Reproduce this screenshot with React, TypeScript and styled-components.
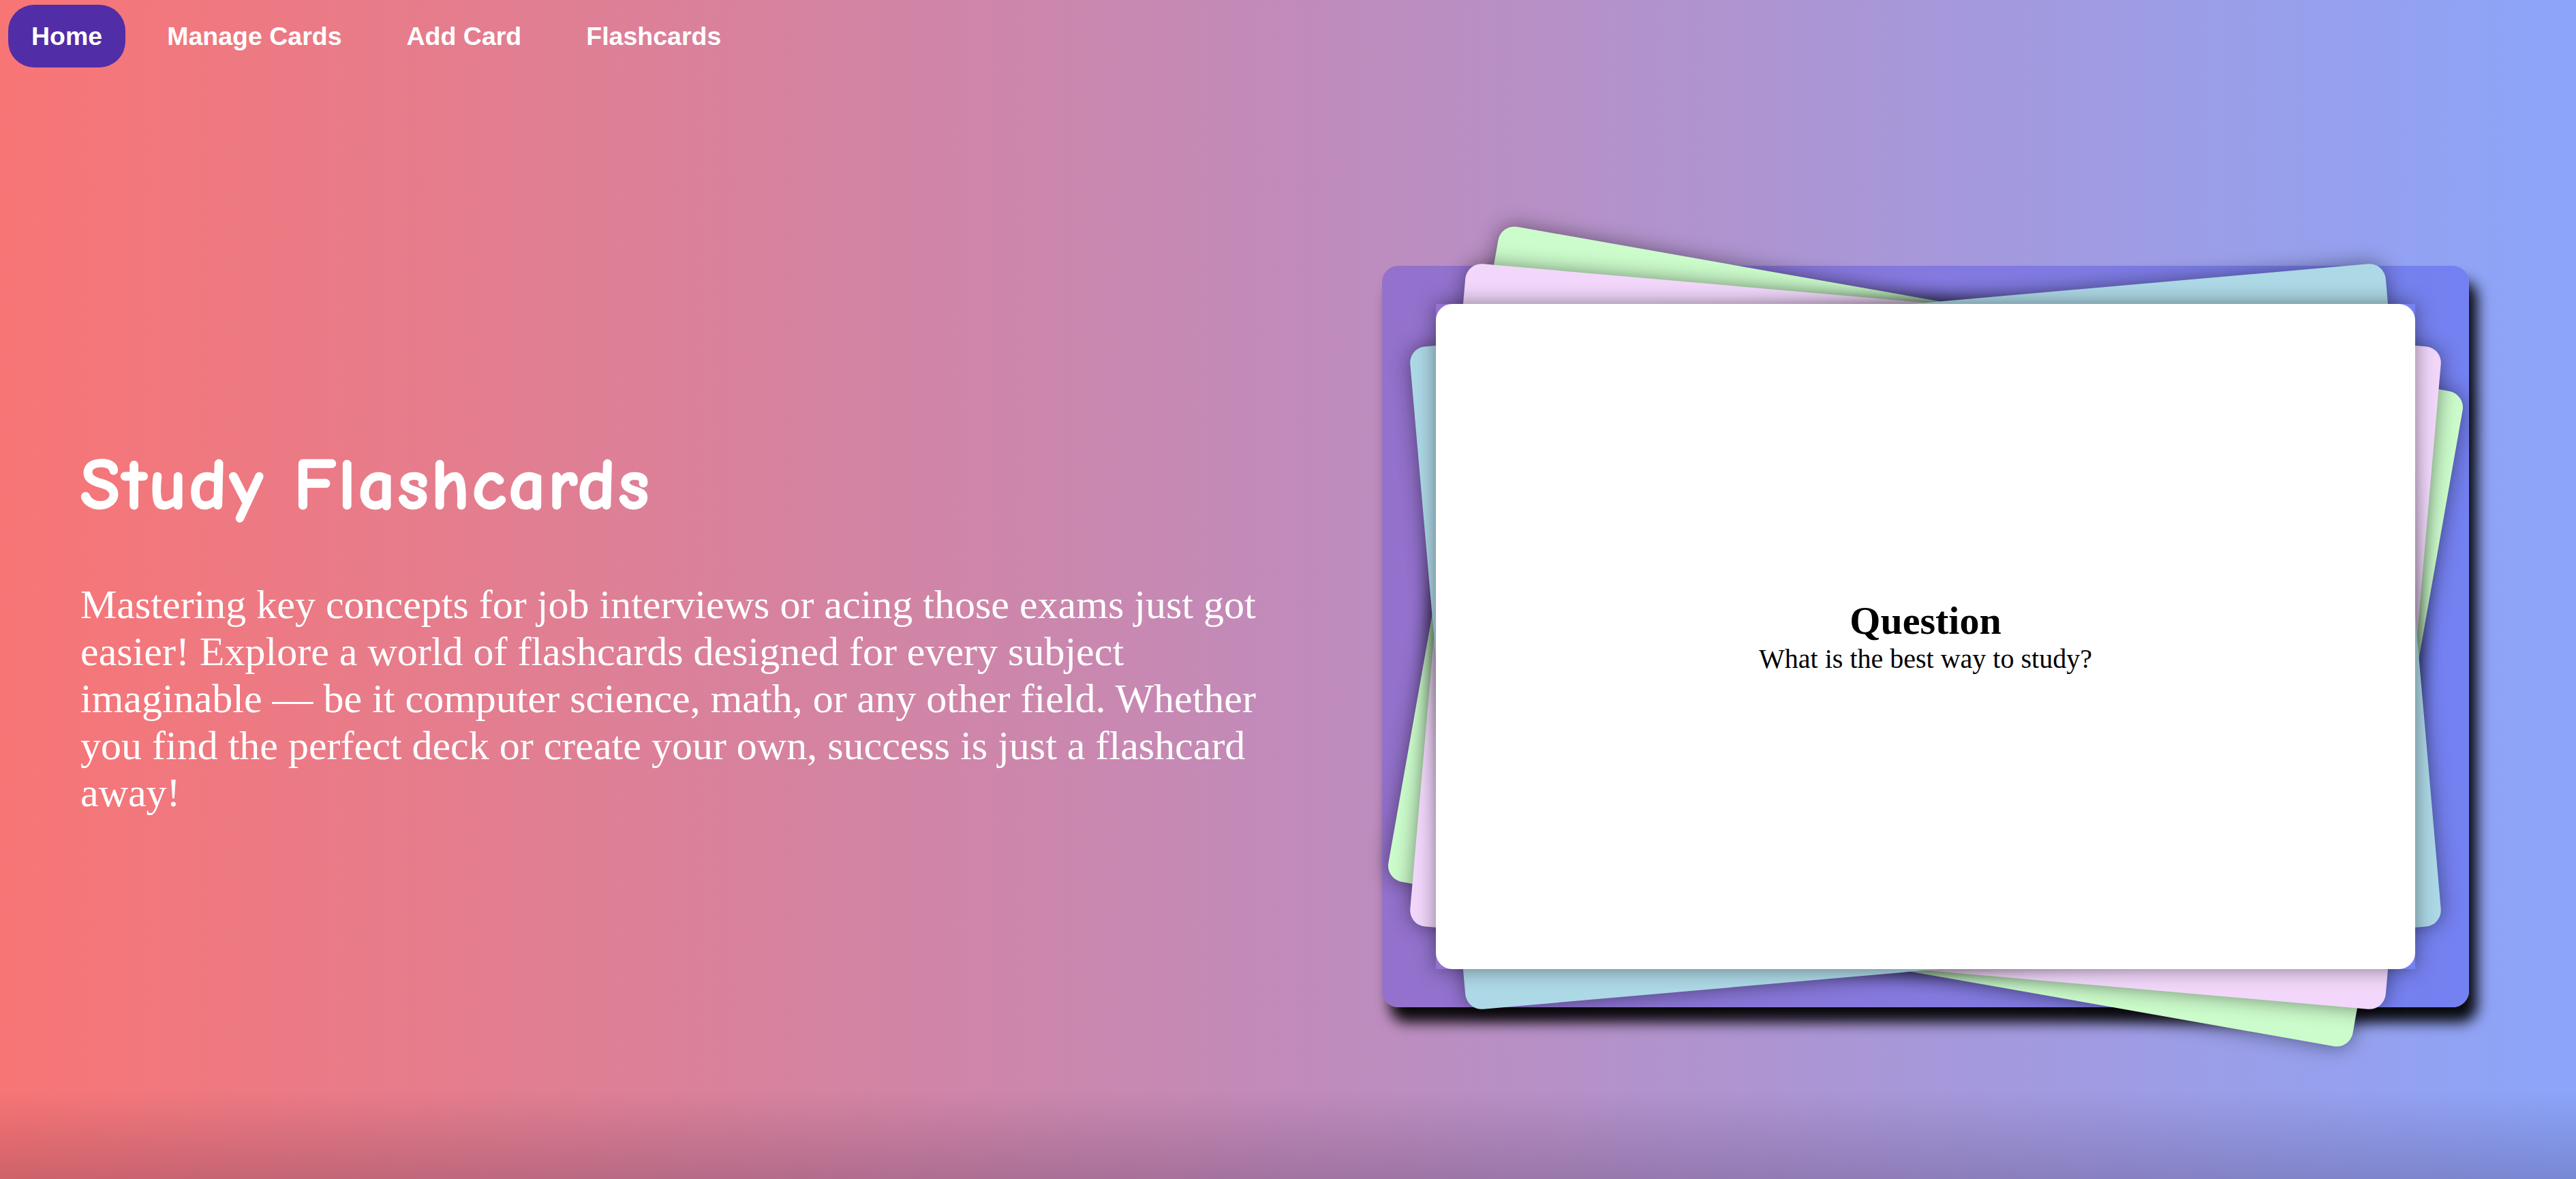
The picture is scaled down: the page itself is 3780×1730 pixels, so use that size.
import React from "react";
import styled, { createGlobalStyle } from "styled-components";

const GlobalStyle = createGlobalStyle`
  html, body {
    margin: 0;
    padding: 0;
    height: 100%;
    overflow: hidden;
  }
  #root {
    height: 100%;
  }
  * {
    box-sizing: border-box;
  }
`;

const Page = styled.div`
  height: 100vh;
  display: flex;
  flex-direction: column;
  background:
    linear-gradient(to top, rgba(40, 20, 60, 0.2), rgba(40, 20, 60, 0) 130px),
    linear-gradient(to right, #f87575, #c18bba 50%, #8ca5fa);
`;

const Nav = styled.nav`
  display: flex;
  align-items: flex-start;
  gap: 27px;
  padding: 7px 12px 0;
  height: 138px;
`;

const NavItem = styled.a<{ $active?: boolean }>`
  display: flex;
  align-items: center;
  height: 92px;
  padding: 0 34px;
  border-radius: 38px;
  background: ${(p) => (p.$active ? "#512da8" : "transparent")};
  color: #ffffff;
  font-family: "Liberation Sans", Arial, sans-serif;
  font-weight: 700;
  font-size: 37.5px;
  text-decoration: none;
  cursor: pointer;
`;

const Hero = styled.main`
  flex: 1;
  display: flex;
  align-items: center;
  justify-content: space-between;
  padding: 0 157px 0 118px;
`;

const Intro = styled.section`
  width: 1762px;
  padding-bottom: 12px;
  color: #ffffff;
`;

const Title = styled.h1`
  margin: 0 0 88px;
  font-family: "Comic Sans MS", "Comic Neue", "DejaVu Sans", sans-serif;
  font-weight: 700;
  font-size: 106px;
  letter-spacing: 4px;
  line-height: 1;
  -webkit-text-stroke: 2.5px #ffffff;
`;

const Lead = styled.p`
  margin: 0;
  font-family: "Liberation Serif", "Times New Roman", serif;
  font-size: 60px;
  line-height: 69px;
`;

const Stack = styled.div`
  position: relative;
  width: 1595px;
  height: 1088px;
  flex-shrink: 0;
  border-radius: 24px;
  background: linear-gradient(to right, #9471cc, #7481f1);
  box-shadow: 12px 22px 20px rgba(0, 0, 0, 0.95);
`;

const PaperCard = styled.div<{ $color: string; $angle: number }>`
  position: absolute;
  left: 79px;
  top: 56px;
  width: 1437px;
  height: 976px;
  border-radius: 24px;
  background: ${(p) => p.$color};
  transform: rotate(${(p) => p.$angle}deg);
  box-shadow: 0 0 30px rgba(0, 0, 0, 0.45);
`;

const FlipCard = styled.div`
  position: absolute;
  left: 79px;
  top: 56px;
  width: 1437px;
  height: 976px;
  background: linear-gradient(to right, #9373cd, #7682ef);
  box-shadow: 0 0 28px rgba(0, 0, 0, 0.45);
`;

const Face = styled.div`
  width: 100%;
  height: 100%;
  border-radius: 24px;
  background: #ffffff;
  display: flex;
  flex-direction: column;
  align-items: center;
  justify-content: center;
  font-family: "Liberation Serif", "Times New Roman", serif;
  color: #000000;
`;

const FaceTitle = styled.h2`
  margin: 0;
  font-size: 58px;
  font-weight: 700;
  line-height: 1.15;
`;

const FaceText = styled.p`
  margin: 0;
  font-size: 40px;
  line-height: 1.15;
`;

const navLinks = ["Home", "Manage Cards", "Add Card", "Flashcards"];

const paperCards = [
  { color: "#ccfccb", angle: 10 },
  { color: "#f2d7fb", angle: 5 },
  { color: "#add8e6", angle: -5 },
];

export default function App() {
  return (
    <>
      <GlobalStyle />
      <Page>
        <Nav>
          {navLinks.map((label, i) => (
            <NavItem key={label} $active={i === 0}>
              {label}
            </NavItem>
          ))}
        </Nav>
        <Hero>
          <Intro>
            <Title>Study Flashcards</Title>
            <Lead>
              Mastering key concepts for job interviews or acing those exams just
              got easier! Explore a world of flashcards designed for every subject
              imaginable — be it computer science, math, or any other field.
              Whether you find the perfect deck or create your own, success is just
              a flashcard away!
            </Lead>
          </Intro>
          <Stack>
            {paperCards.map((c) => (
              <PaperCard key={c.color} $color={c.color} $angle={c.angle} />
            ))}
            <FlipCard>
              <Face>
                <FaceTitle>Question</FaceTitle>
                <FaceText>What is the best way to study?</FaceText>
              </Face>
            </FlipCard>
          </Stack>
        </Hero>
      </Page>
    </>
  );
}
